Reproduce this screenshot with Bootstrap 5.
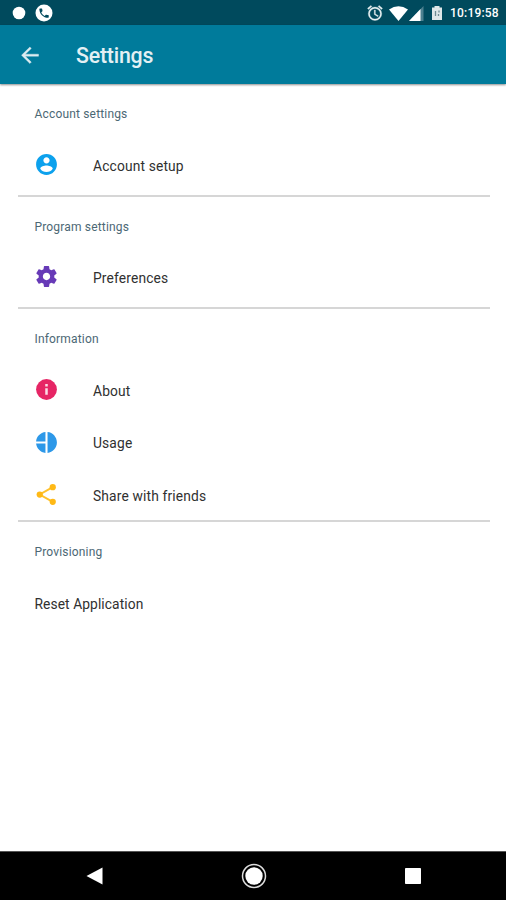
<!DOCTYPE html>
<html lang="en">
<head>
<meta charset="utf-8">
<meta name="viewport" content="width=device-width, initial-scale=1">
<title>Settings</title>
<link href="https://cdn.jsdelivr.net/npm/bootstrap@5.3.0/dist/css/bootstrap.min.css" rel="stylesheet">
<style>
body { font-family: Roboto, "Liberation Sans", sans-serif; height: 900px; overflow: hidden; color: #303030; }
svg { display: block; flex: none; }
.status-bar { height: 25px; background: #004a5d; padding: 1px 7px 0 12px; }
.clock { font-size: 12px; font-weight: 500; line-height: 1; letter-spacing: .2px; width: 49px; white-space: nowrap; }
.status-alarm { margin-right: 4px; position: relative; left: -1px; }
.status-signal { margin-left: 1px; }
.status-battery { margin: 0 7px; }
.app-bar { height: 59px; background: #007b9b; padding: 2px 0 0 18px; box-shadow: 0 1px 2px rgba(0,0,0,.45); z-index: 1; }
.app-title { font-size: 21.3px; font-weight: 500; margin-left: 34px; line-height: 1; color: #e3f0f4; letter-spacing: -.2px; }
.settings-list { padding-top: .2px; }
.settings-group { margin: 0 16px 0 18px; padding-top: 17px; height: 112.5px; border-bottom: 2px solid #d6d6d6; }
.settings-group.tall { height: 213px; }
.group-title { font-size: 12px; line-height: 26px; padding-left: 16.5px; color: #4c6875; letter-spacing: .17px; }
.setting { height: 52.6px; padding-left: 16.4px; font-size: 13.8px; letter-spacing: .15px; }
.setting svg { margin: -2px 33.6px 0 0; }
.setting-label { line-height: 1; padding-top: 2.4px; }
.setting.plain { padding-left: 16.5px; letter-spacing: .08px; }
.nav-keys { height: 49px; background: #000; border-top: 1px solid #555; padding: 0 84px 1px 85px; }
</style>
</head>
<body class="d-flex flex-column bg-white">
<div class="status-bar d-flex align-items-center text-white flex-shrink-0">
  <svg width="14" height="14" viewBox="0 0 14 14"><circle cx="7" cy="7" r="6.300" fill="#fff"/></svg>
  <svg class="ms-2 me-auto" width="20" height="20" viewBox="0 0 20 20"><circle cx="10" cy="10" r="8.500" fill="#fff"/><path transform="translate(3.8 3.9) scale(.52)" fill="#004a5d" d="M6.620 10.790c1.440 2.830 3.760 5.140 6.590 6.590l2.200-2.200c.27-.27.67-.36 1.020-.24 1.120.37 2.330.57 3.570.57.55 0 1 .45 1 1V20c0 .55-.45 1-1 1C10.610 21 3 13.390 3 4c0-.55.45-1 1-1h3.500c.55 0 1 .45 1 1 0 1.250.2 2.450.57 3.570.11.35.03.74-.25 1.020z"/></svg>
  <svg class="status-alarm" width="18" height="18" viewBox="0 0 24 24" fill="#e8f0f2" stroke="#e8f0f2" stroke-width=".4"><path d="M22 5.720l-4.600-3.860-1.290 1.530 4.600 3.860zM7.880 3.390L6.600 1.860 2 5.710l1.290 1.530zM12.500 8H11v6l4.750 2.850.75-1.230-4-2.370zM12 4a9 9 0 1 0 0 18 9 9 0 0 0 0-18zm0 16a7 7 0 1 1 0-14 7 7 0 0 1 0 14z"/></svg>
  <svg width="19" height="15" viewBox="0 0 19 15"><path fill="#fff" d="M9.500 15 0 3.500Q9.500-3 19 3.500z"/></svg>
  <svg class="status-signal" width="15" height="15" viewBox="0 0 15 15"><path fill="#4c8090" d="M14.500 0v15H0z"/><path fill="#fff" d="M11.500 3.100V15H0z"/></svg>
  <svg class="status-battery" width="12" height="16" viewBox="0 0 12 16"><path fill="#dfe7e8" d="M3.500 1h5v1.500H11V15H1V2.500h2.500z"/><path stroke="#6e8b92" stroke-width="1.300" fill="none" d="M4.500 6v5M8 5.500v2M7.500 9v2"/></svg>
  <span class="clock">10:19:58</span>
</div>
<header class="app-bar d-flex align-items-center flex-shrink-0">
  <svg width="24" height="24" viewBox="0 0 24 24"><path fill="#dcecf1" stroke="#dcecf1" stroke-width=".4" d="M20.500 10.200H7.300l5.990-5.700L11.900 3 3.500 11.200l8.400 8.300 1.400-1.400L7.300 12.200h13.200z"/></svg>
  <h1 class="app-title mb-0">Settings</h1>
</header>
<main class="settings-list flex-grow-1">
  <section class="settings-group">
    <div class="group-title">Account settings</div>
    <div class="setting d-flex align-items-center mt-2 pt-2"><svg width="25" height="25" viewBox="0 0 24 24"><path fill="#0ca1ed" d="M12 2C6.480 2 2 6.480 2 12s4.480 10 10 10 10-4.480 10-10S17.520 2 12 2zm0 3c1.660 0 3 1.340 3 3s-1.340 3-3 3-3-1.340-3-3 1.340-3 3-3zm0 14.200c-2.500 0-4.710-1.280-6-3.220.03-1.990 4-3.080 6-3.080 1.990 0 5.970 1.090 6 3.080-1.290 1.940-3.500 3.220-6 3.220z"/></svg><span class="setting-label">Account setup</span></div>
  </section>
  <section class="settings-group">
    <div class="group-title">Program settings</div>
    <div class="setting d-flex align-items-center mt-2 pt-2"><svg width="25" height="25" viewBox="0 0 24 24"><path fill="#673ab7" d="M19.430 12.980c.04-.32.07-.64.07-.98s-.03-.66-.07-.98l2.110-1.650c.19-.15.24-.42.12-.64l-2-3.460c-.12-.22-.39-.3-.61-.22l-2.490 1c-.52-.4-1.080-.73-1.690-.98l-.38-2.650C14.460 2.180 14.250 2 14 2h-4c-.25 0-.46.18-.49.42l-.38 2.650c-.61.25-1.170.59-1.690.98l-2.490-1c-.23-.09-.49 0-.61.22l-2 3.460c-.13.22-.07.49.12.64l2.110 1.650c-.04.32-.07.65-.07.98s.03.66.07.98l-2.110 1.650c-.19.15-.24.42-.12.64l2 3.460c.12.22.39.3.61.22l2.490-1c.52.4 1.080.73 1.690.98l.38 2.650c.03.24.24.42.49.42h4c.25 0 .46-.18.49-.42l.38-2.650c.61-.25 1.170-.59 1.690-.98l2.490 1c.23.09.49 0 .61-.22l2-3.460c.12-.22.07-.49-.12-.64zM12 15.500c-1.930 0-3.500-1.570-3.500-3.500s1.570-3.500 3.500-3.500 3.500 1.570 3.500 3.500-1.570 3.500-3.500 3.500z"/></svg><span class="setting-label">Preferences</span></div>
  </section>
  <section class="settings-group tall">
    <div class="group-title">Information</div>
    <div class="setting d-flex align-items-center mt-2 pt-2"><svg width="25" height="25" viewBox="0 0 24 24"><circle cx="12" cy="12" r="10" fill="#e62565"/><path fill="#fbdce6" d="M10.800 6.800h2.400v2.400h-2.400zM10.800 10.800h2.400V17h-2.400z"/></svg><span class="setting-label">About</span></div>
    <div class="setting d-flex align-items-center pt-2"><svg width="25" height="25" viewBox="0 0 24 24"><path fill="#2d98e8" d="M11 2v9H2c.5-4.800 4.200-8.500 9-9zM13 2c5 .5 9 4.800 9 10s-4 9.500-9 10zM2 13h9v9c-4.800-.5-8.500-4.200-9-9z"/></svg><span class="setting-label">Usage</span></div>
    <div class="setting d-flex align-items-center pt-2"><svg width="25" height="25" viewBox="0 0 24 24"><path stroke="#ffc22e" stroke-width="1.900" fill="none" d="M18 5 5.500 12 18 19"/><g fill="#ffb916"><circle cx="18" cy="5" r="3"/><circle cx="5.500" cy="12" r="3"/><circle cx="18" cy="19" r="3"/></g></svg><span class="setting-label">Share with friends</span></div>
  </section>
  <section class="settings-group border-0">
    <div class="group-title">Provisioning</div>
    <div class="setting plain d-flex align-items-center mt-2 pt-2"><span class="setting-label">Reset Application</span></div>
  </section>
</main>
<nav class="nav-keys d-flex align-items-center justify-content-between flex-shrink-0">
  <svg width="18" height="18" viewBox="0 0 18 18"><path fill="#fff" d="M17.500.5v17L1.500 9z"/></svg>
  <svg width="26" height="26" viewBox="0 0 26 26"><circle cx="13" cy="13" r="11.500" fill="none" stroke="#ddd" stroke-width="1.500"/><circle cx="13" cy="13" r="8.700" fill="#fff"/></svg>
  <svg width="18" height="18" viewBox="0 0 18 18"><rect x="1" y="1" width="16" height="16" rx=".8" fill="#fff"/></svg>
</nav>
<script src="https://cdn.jsdelivr.net/npm/bootstrap@5.3.0/dist/js/bootstrap.bundle.min.js"></script>
</body>
</html>
